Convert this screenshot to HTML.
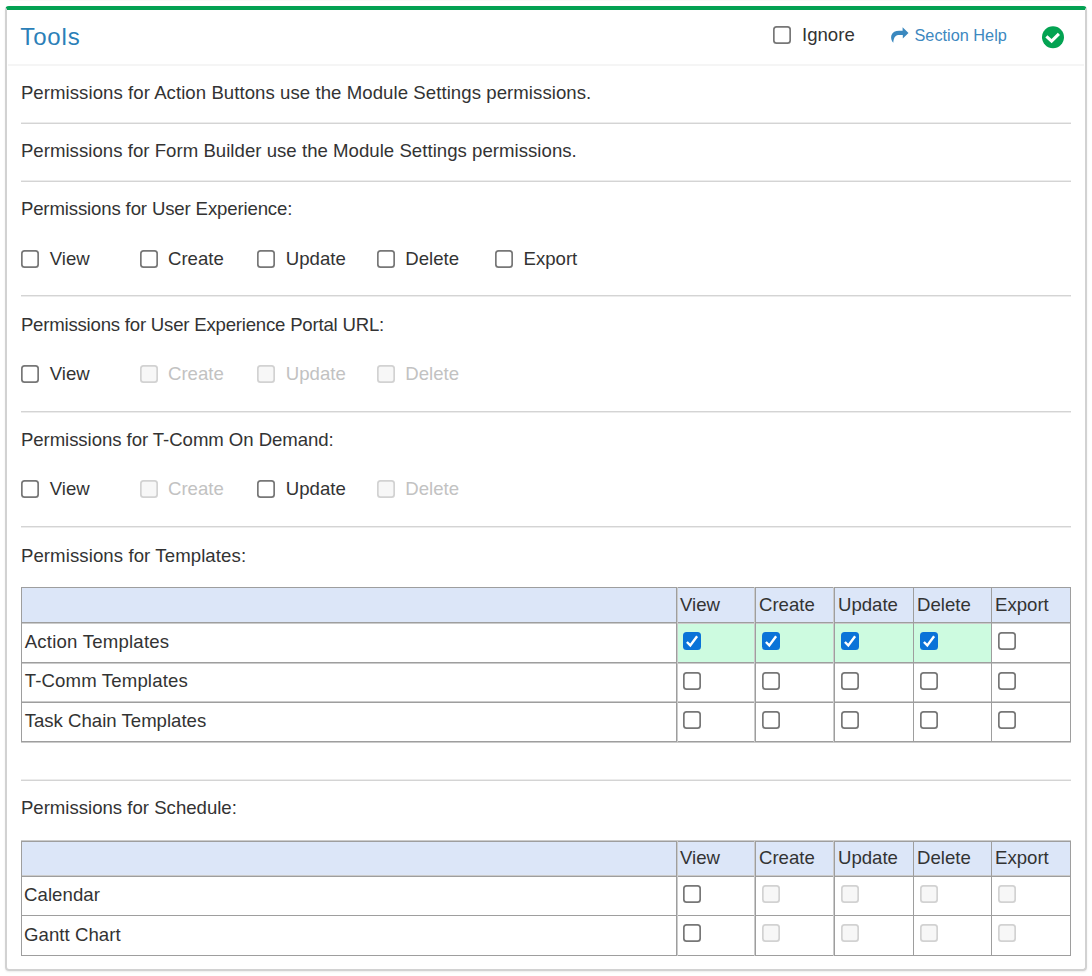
<!DOCTYPE html>
<html><head><meta charset="utf-8"><title>Tools</title>
<style>
html,body{margin:0;padding:0;background:#fff;width:1092px;height:976px;overflow:hidden;position:relative}
body{font-family:"Liberation Sans",sans-serif}
.card{position:absolute;left:5px;top:6px;width:1078px;height:959px;border:2px solid #d2d2d2;border-top:4px solid #03a152;border-radius:4px;box-shadow:0 1px 2px rgba(0,0,0,.08)}
.t{position:absolute;white-space:nowrap;line-height:24px}
.r{position:absolute}
.cb{position:absolute;box-sizing:border-box;width:18px;height:18px;border-radius:3.5px;background:#fff;box-shadow:inset 0 0 0 1.7px #777}
.cb.dis{background:#f7f7f7;box-shadow:inset 0 0 0 1.7px #d2d2d2}
.cb.on{background:#0a73d8;box-shadow:none}
.cb svg{position:absolute;left:0;top:0}
</style></head><body>
<div class="card"></div>
<div class="r" style="left:9px;top:0px;width:1075px;height:1px;background:#fafafa"></div>
<div class="t" style="left:20.30px;top:24.78px;font-size:24px;color:#2b7fb8;letter-spacing:0.85px">Tools</div>
<div class="cb" style="left:773.25px;top:26.35px"></div>
<div class="t" style="left:802.00px;top:22.66px;font-size:18.6px;color:#333333;">Ignore</div>
<svg class="r" style="left:888px;top:24px" width="24" height="22" viewBox="0 0 24 22"><path d="M5.3 18.7 C3.4 16.9 2.6 13.6 3.4 11.2 C4.5 8.2 7.5 6.8 11 6.8 L14.6 6.8 L14.6 3.2 L20.5 9.0 L14.8 14.6 L14.8 11.0 L10.2 11.0 C7.0 11.4 5.6 14.2 5.3 18.7 Z" fill="#3a88bf"/></svg>
<div class="t" style="left:914.50px;top:23.35px;font-size:16.3px;color:#3d88c0;">Section Help</div>
<svg class="r" style="left:1041px;top:26px" width="24" height="23" viewBox="0 0 24 23"><circle cx="12" cy="11.2" r="11" fill="#03a352"/><path d="M5.4 10.3 L10.6 15.2 L17.9 7.8" fill="none" stroke="#fff" stroke-width="3.1"/></svg>
<div class="r" style="left:8px;top:64px;width:1076px;height:2px;background:#f5f5f5"></div>
<div class="t" style="left:20.90px;top:80.76px;font-size:18.6px;color:#333333;letter-spacing:0.061px">Permissions for Action Buttons use the Module Settings permissions.</div>
<div class="r" style="left:21px;top:123px;width:1050px;height:1px;background:#d4d4d4"></div>
<div class="r" style="left:21px;top:122px;width:1050px;height:1px;background:#ececec"></div>
<div class="t" style="left:20.90px;top:138.86px;font-size:18.6px;color:#333333;letter-spacing:0.031px">Permissions for Form Builder use the Module Settings permissions.</div>
<div class="r" style="left:21px;top:181px;width:1050px;height:1px;background:#d4d4d4"></div>
<div class="r" style="left:21px;top:180px;width:1050px;height:1px;background:#ececec"></div>
<div class="t" style="left:20.90px;top:196.56px;font-size:18.6px;color:#333333;letter-spacing:-0.142px">Permissions for User Experience:</div>
<div class="cb" style="left:21.30px;top:249.90px"></div>
<div class="t" style="left:49.80px;top:246.56px;font-size:18.6px;color:#333333;">View</div>
<div class="cb" style="left:139.50px;top:249.90px"></div>
<div class="t" style="left:168.00px;top:246.56px;font-size:18.6px;color:#333333;">Create</div>
<div class="cb" style="left:257.30px;top:249.90px"></div>
<div class="t" style="left:285.80px;top:246.56px;font-size:18.6px;color:#333333;">Update</div>
<div class="cb" style="left:376.80px;top:249.90px"></div>
<div class="t" style="left:405.30px;top:246.56px;font-size:18.6px;color:#333333;">Delete</div>
<div class="cb" style="left:495.00px;top:249.90px"></div>
<div class="t" style="left:523.50px;top:246.56px;font-size:18.6px;color:#333333;">Export</div>
<div class="r" style="left:21px;top:295px;width:1050px;height:1px;background:#d4d4d4"></div>
<div class="r" style="left:21px;top:296px;width:1050px;height:1px;background:#ececec"></div>
<div class="t" style="left:20.90px;top:312.76px;font-size:18.6px;color:#333333;letter-spacing:-0.207px">Permissions for User Experience Portal URL:</div>
<div class="cb" style="left:21.30px;top:365.00px"></div>
<div class="t" style="left:49.80px;top:361.56px;font-size:18.6px;color:#333333;">View</div>
<div class="cb dis" style="left:139.50px;top:365.00px"></div>
<div class="t" style="left:168.00px;top:361.56px;font-size:18.6px;color:#c2c2c2;">Create</div>
<div class="cb dis" style="left:257.30px;top:365.00px"></div>
<div class="t" style="left:285.80px;top:361.56px;font-size:18.6px;color:#c2c2c2;">Update</div>
<div class="cb dis" style="left:376.80px;top:365.00px"></div>
<div class="t" style="left:405.30px;top:361.56px;font-size:18.6px;color:#c2c2c2;">Delete</div>
<div class="r" style="left:21px;top:411px;width:1050px;height:1px;background:#d4d4d4"></div>
<div class="r" style="left:21px;top:412px;width:1050px;height:1px;background:#ececec"></div>
<div class="t" style="left:20.90px;top:427.66px;font-size:18.6px;color:#333333;letter-spacing:-0.062px">Permissions for T-Comm On Demand:</div>
<div class="cb" style="left:21.30px;top:480.30px"></div>
<div class="t" style="left:49.80px;top:476.76px;font-size:18.6px;color:#333333;">View</div>
<div class="cb dis" style="left:139.50px;top:480.30px"></div>
<div class="t" style="left:168.00px;top:476.76px;font-size:18.6px;color:#c2c2c2;">Create</div>
<div class="cb" style="left:257.30px;top:480.30px"></div>
<div class="t" style="left:285.80px;top:476.76px;font-size:18.6px;color:#333333;">Update</div>
<div class="cb dis" style="left:376.80px;top:480.30px"></div>
<div class="t" style="left:405.30px;top:476.76px;font-size:18.6px;color:#c2c2c2;">Delete</div>
<div class="r" style="left:21px;top:526px;width:1050px;height:1px;background:#d4d4d4"></div>
<div class="r" style="left:21px;top:527px;width:1050px;height:1px;background:#ececec"></div>
<div class="t" style="left:20.90px;top:543.86px;font-size:18.6px;color:#333333;letter-spacing:0.092px">Permissions for Templates:</div>
<div class="r" style="left:21px;top:780px;width:1050px;height:1px;background:#d4d4d4"></div>
<div class="r" style="left:21px;top:779px;width:1050px;height:1px;background:#ececec"></div>
<div class="t" style="left:20.90px;top:795.86px;font-size:18.6px;color:#333333;">Permissions for Schedule:</div>
<div class="r" style="left:21px;top:588px;width:1049px;height:34px;background:#dce6f8"></div>
<div class="r" style="left:676px;top:623px;width:315px;height:39px;background:#cdfbe0"></div>
<div class="r" style="left:21px;top:587px;width:1050px;height:1px;background:#9e9e9e"></div>
<div class="r" style="left:21px;top:622px;width:1050px;height:1px;background:#9e9e9e"></div>
<div class="r" style="left:21px;top:623px;width:1050px;height:1px;background:#cbcbcb"></div>
<div class="r" style="left:21px;top:662px;width:1050px;height:1px;background:#9e9e9e"></div>
<div class="r" style="left:21px;top:663px;width:1050px;height:1px;background:#cbcbcb"></div>
<div class="r" style="left:21px;top:702px;width:1050px;height:1px;background:#9e9e9e"></div>
<div class="r" style="left:21px;top:701px;width:1050px;height:1px;background:#cbcbcb"></div>
<div class="r" style="left:21px;top:741px;width:1050px;height:1px;background:#9e9e9e"></div>
<div class="r" style="left:21px;top:742px;width:1050px;height:1px;background:#cbcbcb"></div>
<div class="r" style="left:21px;top:587px;width:1px;height:155px;background:#9e9e9e"></div>
<div class="r" style="left:676px;top:587px;width:1px;height:155px;background:#9e9e9e"></div>
<div class="r" style="left:677px;top:587px;width:1px;height:155px;background:#cbcbcb"></div>
<div class="r" style="left:755px;top:587px;width:1px;height:155px;background:#9e9e9e"></div>
<div class="r" style="left:754px;top:587px;width:1px;height:155px;background:#cbcbcb"></div>
<div class="r" style="left:834px;top:587px;width:1px;height:155px;background:#9e9e9e"></div>
<div class="r" style="left:833px;top:587px;width:1px;height:155px;background:#cbcbcb"></div>
<div class="r" style="left:913px;top:587px;width:1px;height:155px;background:#9e9e9e"></div>
<div class="r" style="left:991px;top:587px;width:1px;height:155px;background:#9e9e9e"></div>
<div class="r" style="left:1070px;top:587px;width:1px;height:155px;background:#9e9e9e"></div>
<div class="t" style="left:680.00px;top:592.96px;font-size:18.6px;color:#333333;">View</div>
<div class="t" style="left:759.00px;top:592.96px;font-size:18.6px;color:#333333;">Create</div>
<div class="t" style="left:838.00px;top:592.96px;font-size:18.6px;color:#333333;">Update</div>
<div class="t" style="left:917.00px;top:592.96px;font-size:18.6px;color:#333333;">Delete</div>
<div class="t" style="left:995.00px;top:592.96px;font-size:18.6px;color:#333333;">Export</div>
<div class="t" style="left:24.70px;top:630.36px;font-size:18.6px;color:#333333;letter-spacing:0.213px">Action Templates</div>
<div class="cb on" style="left:682.60px;top:632.00px"><svg width="18" height="18" viewBox="-0.5 -0.5 18 18"><path d="M3.4 9.5 L6.8 12.9 L13.6 3.8" fill="none" stroke="#fff" stroke-width="2.4"/></svg></div>
<div class="cb on" style="left:761.60px;top:632.00px"><svg width="18" height="18" viewBox="-0.5 -0.5 18 18"><path d="M3.4 9.5 L6.8 12.9 L13.6 3.8" fill="none" stroke="#fff" stroke-width="2.4"/></svg></div>
<div class="cb on" style="left:840.60px;top:632.00px"><svg width="18" height="18" viewBox="-0.5 -0.5 18 18"><path d="M3.4 9.5 L6.8 12.9 L13.6 3.8" fill="none" stroke="#fff" stroke-width="2.4"/></svg></div>
<div class="cb on" style="left:919.60px;top:632.00px"><svg width="18" height="18" viewBox="-0.5 -0.5 18 18"><path d="M3.4 9.5 L6.8 12.9 L13.6 3.8" fill="none" stroke="#fff" stroke-width="2.4"/></svg></div>
<div class="cb" style="left:997.60px;top:632.00px"></div>
<div class="t" style="left:24.70px;top:669.16px;font-size:18.6px;color:#333333;letter-spacing:0.147px">T-Comm Templates</div>
<div class="cb" style="left:682.60px;top:671.70px"></div>
<div class="cb" style="left:761.60px;top:671.70px"></div>
<div class="cb" style="left:840.60px;top:671.70px"></div>
<div class="cb" style="left:919.60px;top:671.70px"></div>
<div class="cb" style="left:997.60px;top:671.70px"></div>
<div class="t" style="left:24.70px;top:708.56px;font-size:18.6px;color:#333333;letter-spacing:0.000px">Task Chain Templates</div>
<div class="cb" style="left:682.60px;top:711.00px"></div>
<div class="cb" style="left:761.60px;top:711.00px"></div>
<div class="cb" style="left:840.60px;top:711.00px"></div>
<div class="cb" style="left:919.60px;top:711.00px"></div>
<div class="cb" style="left:997.60px;top:711.00px"></div>
<div class="r" style="left:21px;top:842px;width:1049px;height:34px;background:#dce6f8"></div>
<div class="r" style="left:21px;top:841px;width:1050px;height:1px;background:#9e9e9e"></div>
<div class="r" style="left:21px;top:840px;width:1050px;height:1px;background:#cbcbcb"></div>
<div class="r" style="left:21px;top:876px;width:1050px;height:1px;background:#9e9e9e"></div>
<div class="r" style="left:21px;top:875px;width:1050px;height:1px;background:#cbcbcb"></div>
<div class="r" style="left:21px;top:915px;width:1050px;height:1px;background:#9e9e9e"></div>
<div class="r" style="left:21px;top:955px;width:1050px;height:1px;background:#9e9e9e"></div>
<div class="r" style="left:21px;top:841px;width:1px;height:115px;background:#9e9e9e"></div>
<div class="r" style="left:676px;top:841px;width:1px;height:115px;background:#9e9e9e"></div>
<div class="r" style="left:677px;top:841px;width:1px;height:115px;background:#cbcbcb"></div>
<div class="r" style="left:755px;top:841px;width:1px;height:115px;background:#9e9e9e"></div>
<div class="r" style="left:754px;top:841px;width:1px;height:115px;background:#cbcbcb"></div>
<div class="r" style="left:834px;top:841px;width:1px;height:115px;background:#9e9e9e"></div>
<div class="r" style="left:833px;top:841px;width:1px;height:115px;background:#cbcbcb"></div>
<div class="r" style="left:913px;top:841px;width:1px;height:115px;background:#9e9e9e"></div>
<div class="r" style="left:991px;top:841px;width:1px;height:115px;background:#9e9e9e"></div>
<div class="r" style="left:1070px;top:841px;width:1px;height:115px;background:#9e9e9e"></div>
<div class="t" style="left:680.00px;top:845.56px;font-size:18.6px;color:#333333;">View</div>
<div class="t" style="left:759.00px;top:845.56px;font-size:18.6px;color:#333333;">Create</div>
<div class="t" style="left:838.00px;top:845.56px;font-size:18.6px;color:#333333;">Update</div>
<div class="t" style="left:917.00px;top:845.56px;font-size:18.6px;color:#333333;">Delete</div>
<div class="t" style="left:995.00px;top:845.56px;font-size:18.6px;color:#333333;">Export</div>
<div class="t" style="left:24.00px;top:882.96px;font-size:18.6px;color:#333333;letter-spacing:0.071px">Calendar</div>
<div class="cb" style="left:682.60px;top:884.50px"></div>
<div class="cb dis" style="left:761.60px;top:884.50px"></div>
<div class="cb dis" style="left:840.60px;top:884.50px"></div>
<div class="cb dis" style="left:919.60px;top:884.50px"></div>
<div class="cb dis" style="left:997.60px;top:884.50px"></div>
<div class="t" style="left:24.00px;top:922.66px;font-size:18.6px;color:#333333;letter-spacing:0.050px">Gantt Chart</div>
<div class="cb" style="left:682.60px;top:924.30px"></div>
<div class="cb dis" style="left:761.60px;top:924.30px"></div>
<div class="cb dis" style="left:840.60px;top:924.30px"></div>
<div class="cb dis" style="left:919.60px;top:924.30px"></div>
<div class="cb dis" style="left:997.60px;top:924.30px"></div>
</body></html>
